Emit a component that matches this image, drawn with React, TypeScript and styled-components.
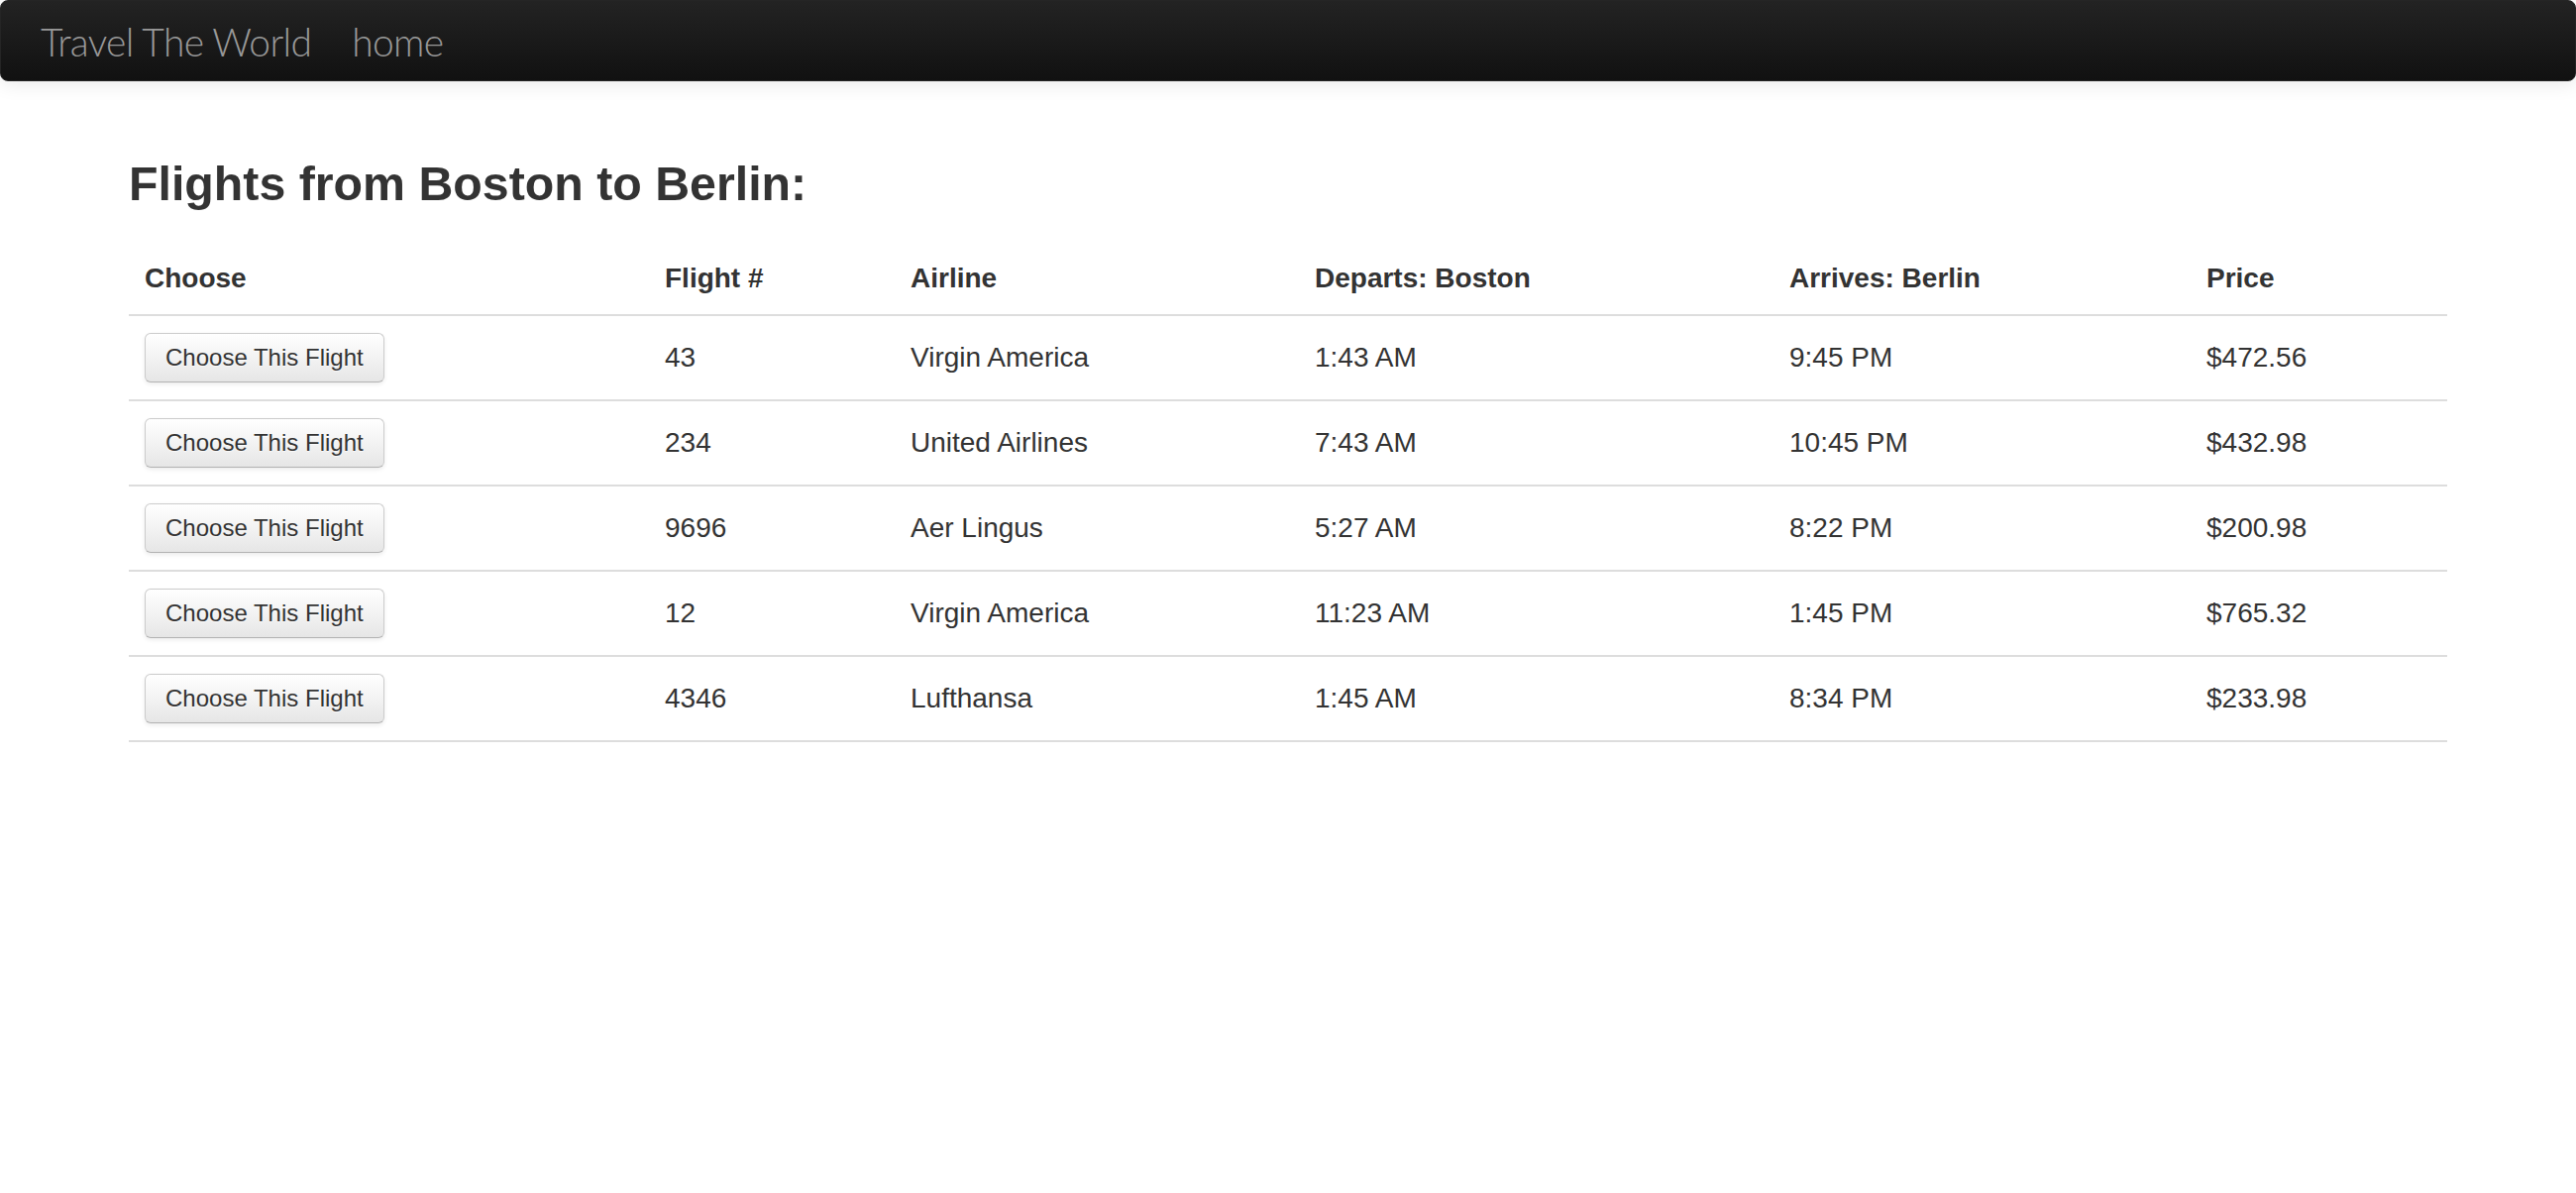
import React from "react";
import styled, { createGlobalStyle } from "styled-components";

const GlobalStyle = createGlobalStyle`
  html, body {
    margin: 0;
    padding: 0;
    background: #ffffff;
  }
  body {
    font-family: "Liberation Sans", Arial, Helvetica, sans-serif;
    color: #333333;
  }
  * { box-sizing: border-box; }
`;

const Navbar = styled.nav`
  display: flex;
  align-items: center;
  height: 82px;
  padding: 2px 0 0 40px;
  border: 1px solid #252525;
  border-radius: 8px;
  background: linear-gradient(to bottom, #232323, #111111);
  box-shadow: 0 2px 20px rgba(0, 0, 0, 0.1);
`;

const NavText = styled.a<{ $brand?: boolean }>`
  font-family: Lato, "Liberation Sans", sans-serif;
  font-weight: 300;
  font-size: 39px;
  letter-spacing: -0.7px;
  line-height: 40px;
  color: #999999;
  text-decoration: none;
  margin-right: ${(p) => (p.$brand ? "41px" : "0")};
`;

const Container = styled.main`
  width: 2340px;
  margin: 0 auto;
`;

const Title = styled.h2`
  margin: 73px 0 30px;
  font-size: 48.3px;
  line-height: 60px;
  font-weight: bold;
  color: #333333;
`;

const Table = styled.table`
  width: 100%;
  border-collapse: collapse;
  table-layout: fixed;
  border-bottom: 2px solid #dddddd;
`;

const HeadCell = styled.th<{ $w: number }>`
  width: ${(p) => p.$w}px;
  padding: 16px 16px;
  text-align: left;
  font-size: 28px;
  line-height: 40px;
  font-weight: bold;
  color: #333333;
  vertical-align: bottom;
`;

const Row = styled.tr`
  border-top: 2px solid #dddddd;
`;

const Cell = styled.td`
  padding: 17px 16px;
  font-size: 28px;
  line-height: 40px;
  color: #333333;
  vertical-align: middle;
`;

const ChooseButton = styled.button`
  height: 50px;
  padding: 0 20px;
  font-family: "Liberation Sans", Arial, sans-serif;
  font-size: 24px;
  color: #333333;
  text-shadow: 0 1px 1px rgba(255, 255, 255, 0.75);
  background: linear-gradient(to bottom, #ffffff, #e6e6e6);
  border: 1px solid #cccccc;
  border-bottom-color: #b3b3b3;
  border-radius: 6px;
  box-shadow: inset 0 2px 0 rgba(255, 255, 255, 0.2), 0 2px 4px rgba(0, 0, 0, 0.08);
  cursor: pointer;
`;

const columns = [
  { label: "Choose", w: 525 },
  { label: "Flight #", w: 248 },
  { label: "Airline", w: 408 },
  { label: "Departs: Boston", w: 479 },
  { label: "Arrives: Berlin", w: 421 },
  { label: "Price", w: 259 },
];

const flights = [
  { num: "43", airline: "Virgin America", dep: "1:43 AM", arr: "9:45 PM", price: "$472.56" },
  { num: "234", airline: "United Airlines", dep: "7:43 AM", arr: "10:45 PM", price: "$432.98" },
  { num: "9696", airline: "Aer Lingus", dep: "5:27 AM", arr: "8:22 PM", price: "$200.98" },
  { num: "12", airline: "Virgin America", dep: "11:23 AM", arr: "1:45 PM", price: "$765.32" },
  { num: "4346", airline: "Lufthansa", dep: "1:45 AM", arr: "8:34 PM", price: "$233.98" },
];

export default function App() {
  return (
    <>
      <GlobalStyle />
      <Navbar>
        <NavText $brand href="#">Travel The World</NavText>
        <NavText href="#">home</NavText>
      </Navbar>
      <Container>
        <Title>Flights from Boston to Berlin:</Title>
        <Table>
          <thead>
            <tr>
              {columns.map((c) => (
                <HeadCell key={c.label} $w={c.w}>{c.label}</HeadCell>
              ))}
            </tr>
          </thead>
          <tbody>
            {flights.map((f) => (
              <Row key={f.num}>
                <Cell><ChooseButton>Choose This Flight</ChooseButton></Cell>
                <Cell>{f.num}</Cell>
                <Cell>{f.airline}</Cell>
                <Cell>{f.dep}</Cell>
                <Cell>{f.arr}</Cell>
                <Cell>{f.price}</Cell>
              </Row>
            ))}
          </tbody>
        </Table>
      </Container>
    </>
  );
}
